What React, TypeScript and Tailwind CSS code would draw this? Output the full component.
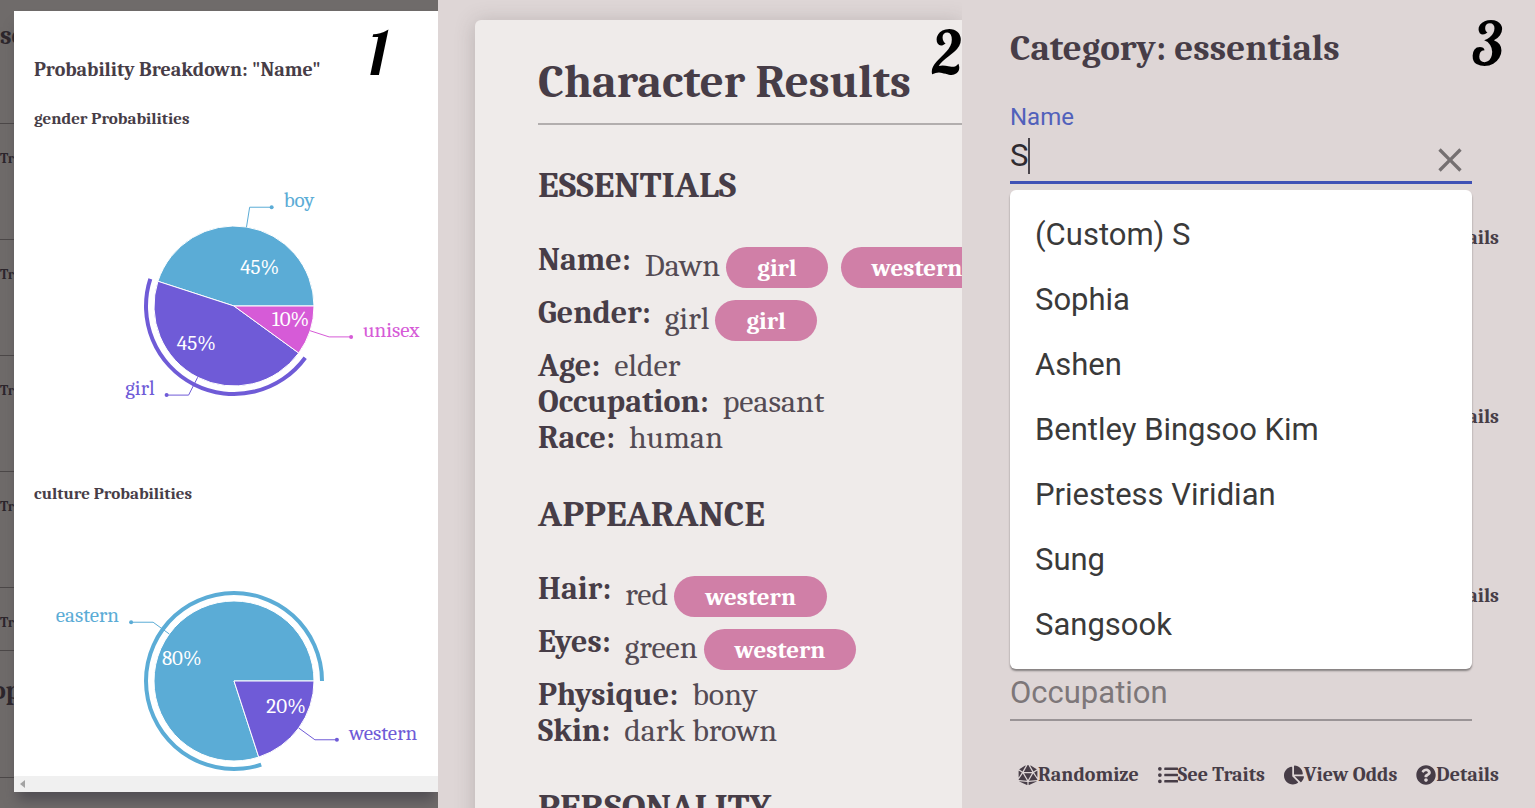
import { FaChartPie, FaDiceD20, FaListUl, FaQuestionCircle } from "react-icons/fa";
import { MdClose } from "react-icons/md";

type Slice = { label: string; percent: number; color: string; ring?: boolean };

const BLUE = "#5bacd6";
const PURPLE = "#6f5bd7";
const PINK = "#d65bd7";

const genderSlices: Slice[] = [
  { label: "boy", percent: 45, color: BLUE },
  { label: "girl", percent: 45, color: PURPLE, ring: true },
  { label: "unisex", percent: 10, color: PINK },
];

const cultureSlices: Slice[] = [
  { label: "eastern", percent: 80, color: BLUE, ring: true },
  { label: "western", percent: 20, color: PURPLE },
];

const CX = 200;
const CY = 175;

function point(radius: number, degrees: number): [number, number] {
  const a = (degrees * Math.PI) / 180;
  return [CX + radius * Math.cos(a), CY - radius * Math.sin(a)];
}

function wedge(inner: number, outer: number, from: number, to: number) {
  const large = to - from > 180 ? 1 : 0;
  const [ax, ay] = point(outer, from);
  const [bx, by] = point(outer, to);
  const [cx, cy] = point(inner, to);
  const [dx, dy] = point(inner, from);
  return `M${ax},${ay}A${outer},${outer},0,${large},0,${bx},${by}L${cx},${cy}A${inner},${inner},0,${large},1,${dx},${dy}Z`;
}

function PieChart({ slices }: { slices: Slice[] }) {
  let angle = 0;
  const parts = slices.map((s) => {
    const from = angle;
    angle += s.percent * 3.6;
    return { ...s, from, to: angle, mid: (from + angle) / 2 };
  });
  return (
    <svg width="400" height="351" className="block shrink-0 overflow-visible">
      {parts.map((p) => {
        const right = point(1, p.mid)[0] >= CX;
        const dir = right ? 1 : -1;
        const [sx, sy] = point(80, p.mid);
        const [mx, my] = point(100, p.mid);
        const ex = mx + dir * 22;
        return (
          <g key={p.label}>
            <path d={wedge(0, 80, p.from, p.to)} fill={p.color} stroke="#fff" />
            {p.ring && <path d={wedge(86, 90, p.from, p.to)} fill={p.color} />}
            <path d={`M${sx},${sy}L${mx},${my}L${ex},${my}`} fill="none" stroke={p.color} />
            <circle cx={ex} cy={my} r="2" fill={p.color} />
            <text x={ex + dir * 12} y={my} textAnchor={right ? "start" : "end"} fill={p.color}>
              {p.label}
            </text>
          </g>
        );
      })}
      {parts.map((p) => {
        const [x, y] = point(40, p.mid);
        return (
          <text key={p.label} x={x} y={y + 8} textAnchor={x > CX ? "start" : "end"} fill="#fff">
            {p.percent}%
          </text>
        );
      })}
    </svg>
  );
}

const serif = "font-[Cambria,Caladea,'Liberation_Serif',serif]";

function Marker({ children, place }: { children: string; place: string }) {
  return (
    <span
      className={`absolute ${place} font-[Lobster,'Liberation_Serif',serif] text-[60px] leading-[64px] text-black`}
    >
      {children}
    </span>
  );
}

function OddsPanel() {
  return (
    <section className="relative flex overflow-hidden bg-[#6f6b6a] pt-[11px] pb-4 pl-[14px]">
      <div className="absolute inset-0 overflow-hidden text-[#2c262c]">
        <div className="h-[124px] border-b border-[#4c4848] pt-[22px] text-[26px] leading-7 font-bold">se</div>
        {["gender", "age", "occupation", "race"].map((k) => (
          <div key={k} className="h-[116px] border-b border-[#4c4848] pt-[27px] text-[14px] leading-4 font-bold">
            Tr
          </div>
        ))}
        <div className="h-[63px] border-b border-[#4c4848] pt-[27px] text-[14px] leading-4 font-bold">Tr</div>
        <div className="-ml-2 h-[127px] border-b border-[#4c4848] pt-[26px] text-[26px] leading-7 font-bold">op</div>
      </div>
      <div className="relative flex min-w-0 flex-1 flex-col bg-white shadow-[0_12px_12px_-4px_rgba(60,58,68,0.6)]">
        <div className="min-h-0 flex-1 overflow-hidden pl-5 text-[21px]">
          <h2 className="mt-[45px] text-[20px] leading-7 font-bold">Probability Breakdown: "Name"</h2>
          <h3 className="mt-[23px] text-[17px] leading-6 font-bold">gender Probabilities</h3>
          <PieChart slices={genderSlices} />
          <h3 className="text-[17px] leading-6 font-bold">culture Probabilities</h3>
          <PieChart slices={cultureSlices} />
        </div>
        <div className="flex h-4 items-center bg-[#f0f0f0] pl-[6px]">
          <svg width="5" height="8" viewBox="0 0 5 8">
            <path d="M5 0v8L0 4z" fill="#a3a3a3" />
          </svg>
        </div>
      </div>
      <Marker place="top-[21px] right-[50px]">1</Marker>
    </section>
  );
}

function Trait({ name, value, tags = [] }: { name: string; value: string; tags?: string[] }) {
  return (
    <div className="flex items-start text-[32px] leading-9 whitespace-nowrap">
      <dt className="mr-[14px] font-bold">{name}:</dt>
      <dd className={tags.length ? "flex items-baseline gap-[6px] pt-[5px] pb-[7px]" : ""}>
        <span className="text-[#544b54]">{value}</span>
        {tags.length > 0 && (
          <span className="flex gap-[13px]">
            {tags.map((t) => (
              <span
                key={t}
                className="rounded-full bg-[#d07fa7] px-[31px] text-[25px] leading-[41px] font-bold text-white"
              >
                {t}
              </span>
            ))}
          </span>
        )}
      </dd>
    </div>
  );
}

function ResultsPanel() {
  const heading = "mb-[37px] pt-[38px] text-[37px] leading-10 font-bold uppercase";
  return (
    <section className="relative overflow-hidden pt-5 pl-[37px]">
      <div className="rounded-tl-[6px] bg-[#efebea] pt-8 pl-[63px] shadow-[0_2px_20px_rgba(80,70,70,0.25)]">
        <h1 className="text-[47px] leading-[60px] font-bold whitespace-nowrap">Character Results</h1>
        <div className="mt-[11px] mb-[2px] h-[2px] bg-[#b2aeae]" />
        <h2 className={heading}>Essentials</h2>
        <dl>
          <Trait name="Name" value="Dawn" tags={["girl", "western"]} />
          <Trait name="Gender" value="girl" tags={["girl"]} />
          <Trait name="Age" value="elder" />
          <Trait name="Occupation" value="peasant" />
          <Trait name="Race" value="human" />
        </dl>
        <h2 className={heading}>Appearance</h2>
        <dl>
          <Trait name="Hair" value="red" tags={["western"]} />
          <Trait name="Eyes" value="green" tags={["western"]} />
          <Trait name="Physique" value="bony" />
          <Trait name="Skin" value="dark brown" />
        </dl>
        <h2 className={heading}>Personality</h2>
      </div>
      <Marker place="top-[21px] right-0">2</Marker>
    </section>
  );
}

const suggestions = [
  "(Custom) S",
  "Sophia",
  "Ashen",
  "Bentley Bingsoo Kim",
  "Priestess Viridian",
  "Sung",
  "Sangsook",
];

const roboto = "font-[Roboto,'Liberation_Sans',sans-serif]";
const action = "flex items-center text-[20px] leading-6 font-bold whitespace-nowrap";

function CoveredField({ label }: { label: string }) {
  return (
    <div className="h-[179px]">
      <div className="mr-[27px] pt-[74px]">
        <input aria-label={label} className="block h-10 w-full border-b-2 border-[#9a9496] bg-transparent" />
      </div>
      <div className="mt-[41px] flex justify-end">
        <button className={action}>Details</button>
      </div>
    </div>
  );
}

function CategoryPanel() {
  return (
    <section className="relative overflow-hidden pt-[26px] pr-9 pl-12">
      <h2 className="text-[37px] leading-[44px] font-bold">Category: essentials</h2>
      <div className={`relative mt-[33px] mr-[27px] ${roboto}`}>
        <label htmlFor="name" className="block text-[24px] leading-7 text-[#5161bb]">
          Name
        </label>
        <div className="flex h-[53px] items-center border-b-[3px] border-[#3f51b5] pr-[2px]">
          <div className="relative flex-1">
            <input
              id="name"
              defaultValue="S"
              className="block w-full bg-transparent text-[31px] leading-9 text-[#2f2b30] outline-none"
            />
            <span className="absolute top-0 left-[18px] h-9 w-[2px] bg-[#4a454b]" />
          </div>
          <button aria-label="Clear" className="mt-2 text-[#757071]">
            <MdClose className="size-10" />
          </button>
        </div>
        <ul className="absolute inset-x-0 top-[87px] z-10 rounded-[6px] bg-white py-3 text-[31px] leading-[65px] text-[#3a3a3a] shadow-[0_2px_2px_rgba(0,0,0,0.4)]">
          {suggestions.map((s) => (
            <li key={s} className="px-[25px]">
              {s}
            </li>
          ))}
        </ul>
      </div>
      <div className="mt-[42px] flex justify-end">
        <button className={action}>Details</button>
      </div>
      <CoveredField label="Gender" />
      <CoveredField label="Age" />
      <div className={`mr-[27px] pt-[57px] ${roboto}`}>
        <input
          aria-label="Occupation"
          placeholder="Occupation"
          className="block h-14 w-full border-b-2 border-[#9a9496] bg-transparent text-[31px] leading-9 text-[#333] placeholder:text-[#7d7779] outline-none"
        />
      </div>
      <div className="mt-[42px] ml-2 flex justify-between">
        <button className={action}>
          <FaDiceD20 /> Randomize
        </button>
        <button className={action}>
          <FaListUl /> See Traits
        </button>
        <button className={action}>
          <FaChartPie /> View Odds
        </button>
        <button className={action}>
          <FaQuestionCircle /> Details
        </button>
      </div>
      <Marker place="top-[12px] right-8">3</Marker>
    </section>
  );
}

export default function App() {
  return (
    <main className={`grid h-screen grid-cols-[438fr_524fr_573fr] overflow-hidden bg-[#ded6d6] text-[#473d47] ${serif}`}>
      <OddsPanel />
      <ResultsPanel />
      <CategoryPanel />
    </main>
  );
}
